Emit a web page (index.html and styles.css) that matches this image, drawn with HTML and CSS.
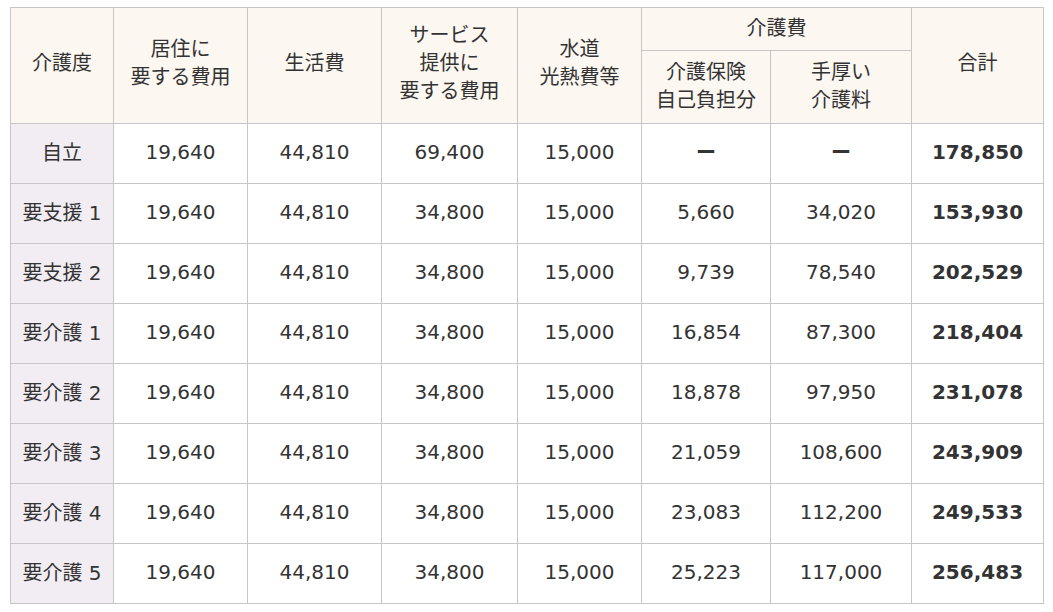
FILE: index.html
```html
<!DOCTYPE html>
<html lang="ja">
<head>
<meta charset="utf-8">
<title>費用表</title>
<link rel="stylesheet" href="styles.css">
</head>
<body>
<table class="cost-table">
  <colgroup>
    <col class="c1"><col class="c2"><col class="c3"><col class="c4"><col class="c5"><col class="c6"><col class="c7"><col class="c8">
  </colgroup>
  <thead>
    <tr class="h1">
      <th rowspan="2" class="tall">介護度</th>
      <th rowspan="2" class="tall">居住に<br>要する費用</th>
      <th rowspan="2" class="tall">生活費</th>
      <th rowspan="2" class="tall">サービス<br>提供に<br>要する費用</th>
      <th rowspan="2" class="tall">水道<br>光熱費等</th>
      <th colspan="2">介護費</th>
      <th rowspan="2" class="tall">合計</th>
    </tr>
    <tr class="h2">
      <th>介護保険<br>自己負担分</th>
      <th>手厚い<br>介護料</th>
    </tr>
  </thead>
  <tbody>
    <tr><th>自立</th><td>19,640</td><td>44,810</td><td>69,400</td><td>15,000</td><td class="dash">ー</td><td class="dash">ー</td><td class="total">178,850</td></tr>
    <tr><th>要支援 1</th><td>19,640</td><td>44,810</td><td>34,800</td><td>15,000</td><td>5,660</td><td>34,020</td><td class="total">153,930</td></tr>
    <tr><th>要支援 2</th><td>19,640</td><td>44,810</td><td>34,800</td><td>15,000</td><td>9,739</td><td>78,540</td><td class="total">202,529</td></tr>
    <tr><th>要介護 1</th><td>19,640</td><td>44,810</td><td>34,800</td><td>15,000</td><td>16,854</td><td>87,300</td><td class="total">218,404</td></tr>
    <tr><th>要介護 2</th><td>19,640</td><td>44,810</td><td>34,800</td><td>15,000</td><td>18,878</td><td>97,950</td><td class="total">231,078</td></tr>
    <tr><th>要介護 3</th><td>19,640</td><td>44,810</td><td>34,800</td><td>15,000</td><td>21,059</td><td>108,600</td><td class="total">243,909</td></tr>
    <tr><th>要介護 4</th><td>19,640</td><td>44,810</td><td>34,800</td><td>15,000</td><td>23,083</td><td>112,200</td><td class="total">249,533</td></tr>
    <tr><th>要介護 5</th><td>19,640</td><td>44,810</td><td>34,800</td><td>15,000</td><td>25,223</td><td>117,000</td><td class="total">256,483</td></tr>
  </tbody>
</table>
</body>
</html>
```
FILE: styles.css
```css
html, body {
  margin: 0;
  background: #ffffff;
}
body {
  padding: 7px 10px;
  font-family: "DejaVu Sans", "Noto Sans CJK JP", sans-serif;
  font-size: 20px;
  color: #333333;
}
.cost-table {
  border-collapse: collapse;
  table-layout: fixed;
  width: 1033px;
}
.c1 { width: 103px; }
.c2 { width: 134px; }
.c3 { width: 134px; }
.c4 { width: 136px; }
.c5 { width: 124px; }
.c6 { width: 129px; }
.c7 { width: 141px; }
.c8 { width: 132px; }
.cost-table th,
.cost-table td {
  border: 1px solid #c6c6c6;
  text-align: center;
  vertical-align: middle;
  padding: 0 0 4px 0;
  font-weight: normal;
}
.cost-table thead th {
  background: #fcf7f1;
  line-height: 28px;
  padding-bottom: 2px;
}
.cost-table thead th.tall {
  padding-bottom: 5px;
}
.h1 th { height: 40px; }
.h2 th { height: 70px; }
.cost-table tbody tr { height: 60px; }
.cost-table tbody th {
  background: #f2edf3;
}
.cost-table td.total {
  font-weight: bold;
}
.cost-table td.dash {
  font-family: "Noto Sans CJK JP", sans-serif;
  font-weight: bold;
}
```
